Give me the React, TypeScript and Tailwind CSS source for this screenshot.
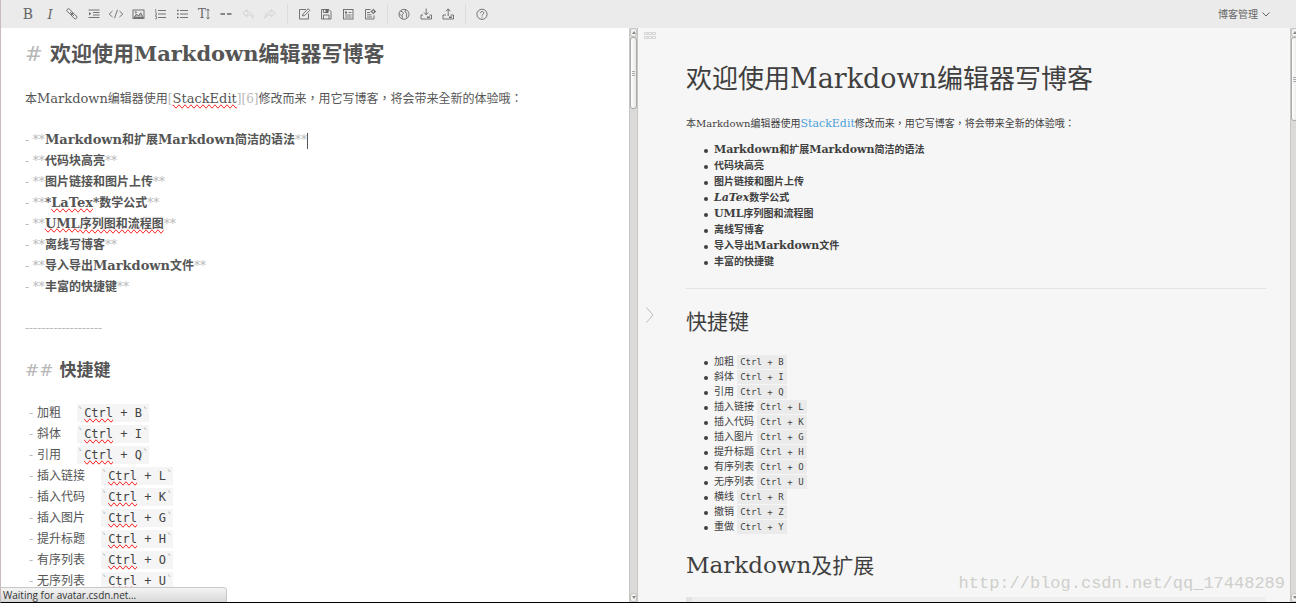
import React from 'react';
import { clsx } from 'clsx';

const serif = "font-['DejaVu_Serif','Noto_Sans_CJK_SC',serif]";
const serifTC = "font-['DejaVu_Serif','Noto_Sans_CJK_TC',serif]";
const mono = "font-['DejaVu_Sans_Mono','Noto_Sans_CJK_SC',monospace]";

const features = [
  'Markdown和扩展Markdown简洁的语法',
  '代码块高亮',
  '图片链接和图片上传',
  '*LaTex*数学公式',
  'UML序列图和流程图',
  '离线写博客',
  '导入导出Markdown文件',
  '丰富的快捷键',
];

const shortcuts = [
  ['加粗', 'B'],
  ['斜体', 'I'],
  ['引用', 'Q'],
  ['插入链接', 'L'],
  ['插入代码', 'K'],
  ['插入图片', 'G'],
  ['提升标题', 'H'],
  ['有序列表', 'O'],
  ['无序列表', 'U'],
  ['横线', 'R'],
  ['撤销', 'Z'],
  ['重做', 'Y'],
];

// Latin words are set slightly larger than the Chinese text around them
function Mixed({ text, latin }: { text: string; latin: string }) {
  return (
    <>
      {text.split(/([A-Za-z]+)/).map((part, i) =>
        /^[A-Za-z]/.test(part) ? (
          <span key={i} className={clsx('leading-none', latin)}>
            {part}
          </span>
        ) : (
          part
        )
      )}
    </>
  );
}

function Icon({ children }: { children: React.ReactNode }) {
  return (
    <svg className="h-3 w-3 overflow-visible" viewBox="0 0 12 12" fill="none" stroke="currentColor" strokeWidth="0.9">
      {children}
    </svg>
  );
}

type Tool = { label: string; icon: React.ReactNode; disabled?: boolean };

const tools: Tool[][] = [
  [
    { label: '加粗', icon: <span className="text-[14px]">B</span> },
    { label: '斜体', icon: <span className="text-[13px] italic">I</span> },
    {
      label: '链接',
      icon: (
        <Icon>
          <rect x="0.4" y="2" width="6.6" height="3.2" rx="1.6" transform="rotate(45 3.7 3.6)" />
          <rect x="4.8" y="6.4" width="6.6" height="3.2" rx="1.6" transform="rotate(45 8.1 8)" />
          <path d="M4 4l4 4" />
        </Icon>
      ),
    },
    {
      label: '引用',
      icon: (
        <Icon>
          <path d="M0.5 2h11M5 4.5h6.5M5 7h6.5M0.5 9.5h11" />
          <path d="M1 4l2.2 1.8L1 7.6z" fill="currentColor" stroke="none" />
        </Icon>
      ),
    },
    {
      label: '代码',
      icon: (
        <Icon>
          <path d="M2.5 3L-0.8 6l3.3 3M9.5 3l3.3 3-3.3 3M7.5 1.8l-3 8.4" />
        </Icon>
      ),
    },
    {
      label: '图片',
      icon: (
        <Icon>
          <rect x="1" y="2" width="11" height="8.5" />
          <path d="M2 9.5l2.5-3.5 2 2 2.2-3.2 2.5 4.7z" fill="currentColor" fillOpacity="0.4" />
          <circle cx="3.8" cy="4.3" r="0.7" />
        </Icon>
      ),
    },
    {
      label: '有序列表',
      icon: (
        <Icon>
          <path d="M4 2.5h8M4 6h8M4 9.5h8" />
          <path d="M1.7 1v2.8M1 4.8h1.4v2.4H1M1 8.2h1.5v2.6H1" strokeWidth="0.7" />
        </Icon>
      ),
    },
    {
      label: '无序列表',
      icon: (
        <Icon>
          <path d="M4 2.5h8M4 6h8M4 9.5h8" />
          <path d="M1 2.5h1.6M1 6h1.6M1 9.5h1.6" strokeWidth="1.4" />
        </Icon>
      ),
    },
    {
      label: '标题',
      icon: (
        <>
          <span className="text-[12px]">T</span>
          <svg className="h-3 w-1" viewBox="0 0 4 12" fill="none" stroke="currentColor" strokeWidth="0.9">
            <path d="M2 1v10M0.5 2.5L2 1l1.5 1.5M0.5 9.5L2 11l1.5-1.5" />
          </svg>
        </>
      ),
    },
    {
      label: '横线',
      icon: (
        <Icon>
          <path d="M0.5 6H5M7 6h4.5" strokeWidth="1.4" />
        </Icon>
      ),
    },
    {
      label: '撤销',
      disabled: true,
      icon: (
        <Icon>
          <path d="M5 1.8L0.8 5.2 5 8.6V6.6c3 0 4.8 1 6 3.6C11 6.4 8.8 4 5 3.8z" />
        </Icon>
      ),
    },
    {
      label: '重做',
      disabled: true,
      icon: (
        <Icon>
          <path d="M7 1.8l4.2 3.4L7 8.6V6.6c-3 0-4.8 1-6 3.6C1 6.4 3.2 4 7 3.8z" />
        </Icon>
      ),
    },
  ],
  [
    {
      label: '新建',
      icon: (
        <Icon>
          <path d="M8 1.5H1.5v9.5h9V5.5" />
          <path d="M4.5 8l.7-2.3 5-5 1.6 1.6-5 5z" />
        </Icon>
      ),
    },
    {
      label: '保存',
      icon: (
        <Icon>
          <path d="M1.5 1.5h7.5L11 3.5V11H1.5z" />
          <path d="M3.5 1.5h4.5v3h-4.5zM3.5 11V7h5.5v4" />
          <path d="M6 1.5h2v3H6z" fill="currentColor" />
        </Icon>
      ),
    },
    {
      label: '草稿',
      icon: (
        <Icon>
          <rect x="1.5" y="1.5" width="9.5" height="9.5" />
          <path d="M6.5 4.5h3M3 7h6.5M3 9h6.5" strokeWidth="0.8" />
          <path d="M3 3.5h2v2H3z" fill="currentColor" stroke="none" />
        </Icon>
      ),
    },
    {
      label: '文档设置',
      icon: (
        <Icon>
          <path d="M6.5 1.5h-5V11H10V7.5M3 4.5h3M3 6.8h4.5M3 9h5" />
          <circle cx="9.3" cy="3.5" r="1.5" strokeWidth="1.2" />
          <path d="M9.3 0.8v1M9.3 5.2v1M6.6 3.5h1M11 3.5h1" />
        </Icon>
      ),
    },
  ],
  [
    {
      label: '发布',
      icon: (
        <Icon>
          <circle cx="6" cy="6.3" r="5" />
          <path d="M2.5 3.2l2 .6 1 1.5-1.500 1.600.3 3.600M7.5 1.800L7 4l1.800 1.200L8.300 8l.7 1.700M1.200 5.500l1.800 2" />
        </Icon>
      ),
    },
    {
      label: '导入',
      icon: (
        <Icon>
          <path d="M3 7H1v4h10.5V7h-2" />
          <path d="M6.2 0.5v6M4 4.5l2.2 2.3 2.2-2.3" />
          <path d="M7 9.2h3" strokeWidth="1.4" />
        </Icon>
      ),
    },
    {
      label: '导出',
      icon: (
        <Icon>
          <path d="M4 7H1v4h10.5V7h-3" />
          <path d="M6.2 8V1M4 3.2L6.2 0.8l2.2 2.4" />
          <path d="M7 9.2h3" strokeWidth="1.4" />
        </Icon>
      ),
    },
  ],
  [
    {
      label: '帮助',
      icon: (
        <Icon>
          <circle cx="6" cy="6.3" r="5.1" />
          <path d="M4.3 5.2C4.3 3 7.8 3 7.8 5 7.8 6.2 6 6.2 6 7.6M6 8.6v1" />
        </Icon>
      ),
    },
  ],
];

function Toolbar() {
  return (
    <header className="flex h-7 shrink-0 items-center bg-[#ebebeb] pl-4 pr-[26px] text-[#666]">
      {tools.map((group, i) => (
        <React.Fragment key={i}>
          {i > 0 && <span className="mr-[5px] ml-[6px] h-5 w-px bg-[#dcdcdc]" />}
          {group.map((tool) => (
            <button
              key={tool.label}
              type="button"
              aria-label={tool.label}
              disabled={tool.disabled}
              className={clsx('flex h-7 w-[22px] items-center justify-center leading-none', tool.disabled && 'text-[#cfcfcf]')}
            >
              {tool.icon}
            </button>
          ))}
        </React.Fragment>
      ))}
      <button type="button" className="ml-auto flex items-center gap-1 font-['Noto_Sans_CJK_SC',sans-serif] text-[10px] leading-4">
        博客管理
        <svg className="h-2 w-2" viewBox="0 0 8 8" fill="none" stroke="currentColor">
          <path d="M0.5 2.5L4 6l3.5-3.5" />
        </svg>
      </button>
    </header>
  );
}

function Arrow({ down }: { down?: boolean }) {
  return (
    <span className="flex h-[9px] shrink-0 items-center justify-center rounded-[3px] border border-[#c4c2bf] bg-[#f4f3f2]">
      <svg className="h-[3px] w-1" viewBox="0 0 4 3" fill="#888">
        <path d={down ? 'M0 0h4L2 3z' : 'M0 3h4L2 0z'} />
      </svg>
    </span>
  );
}

function Scrollbar({ thumb }: { thumb: string }) {
  return (
    <div className="flex w-[9px] shrink-0 flex-col border-x border-[#c9c7c4] bg-[#dbdad8]">
      <Arrow />
      <div
        className={clsx(
          'flex flex-col items-center justify-center gap-px rounded-[3px] border border-[#aaa] bg-linear-to-r from-white to-[#e9e8e6]',
          thumb
        )}
      >
        <span className="h-px w-[3px] bg-[#aaa]" />
        <span className="h-px w-[3px] bg-[#aaa]" />
        <span className="h-px w-[3px] bg-[#aaa]" />
      </div>
      <div className="flex-1" />
      <Arrow down />
    </div>
  );
}

function Mark({ children }: { children: React.ReactNode }) {
  return <span className="font-normal text-[#b8b8b8]">{children}</span>;
}

const misspelt = '[text-decoration-line:spelling-error]';

function Editor() {
  return (
    <section className="flex min-h-0 min-w-0">
      <div className="min-w-0 flex-1 overflow-hidden bg-white pt-[11px] pl-6 text-[12px] leading-[21px] text-[#555]">
        <h1 className="text-[21px] leading-[30px] font-bold">
          <Mark>#</Mark> 欢迎使用Markdown编辑器写博客
        </h1>
        <p className={clsx('mt-5', serifTC)}>
          <Mixed text="本Markdown编辑器使用" latin="text-[13px]" />
          <Mark>[</Mark>
          <span className={clsx('text-[13px] leading-none', misspelt)}>StackEdit</span>
          <Mark>][6]</Mark>
          修改而来，用它写博客，将会带来全新的体验哦：
        </p>
        <ul className="mt-5">
          {features.map((item, i) => (
            <li key={item}>
              <Mark>- **</Mark>
              <b className={clsx(i === 4 && misspelt)}>
                {i === 3 ? (
                  <>
                    *<span className={clsx('text-[13px] leading-none', misspelt)}>LaTex</span>*数学公式
                  </>
                ) : (
                  <Mixed text={item} latin="text-[13px]" />
                )}
              </b>
              <Mark>**</Mark>
              {i === 0 && <span className="inline-block h-4 w-px bg-[#555] align-middle" />}
            </li>
          ))}
        </ul>
        <p className="mt-5">
          <Mark>-------------------</Mark>
        </p>
        <h2 className="mt-[18px] text-[17px] leading-[26px] font-bold">
          <Mark>##</Mark> 快捷键
        </h2>
        <ul className="mt-5 pl-1">
          {shortcuts.map(([name, key]) => (
            <li key={name}>
              <Mark>-</Mark> {name}
              <code className={clsx('ml-4 bg-[#f5f5f5] py-[2px] text-[12px] leading-none text-[#444]', mono)}>
                <Mark>`</Mark>
                <span className={misspelt}>Ctrl</span> + {key}
                <Mark>`</Mark>
              </code>
            </li>
          ))}
        </ul>
      </div>
      <Scrollbar thumb="h-[72px]" />
    </section>
  );
}

function Bullet() {
  return <span className="mr-[6px] inline-block size-1 rounded-full bg-current align-middle" />;
}

function Preview() {
  return (
    <section className="relative flex min-h-0 min-w-0 bg-[#f6f6f6]">
      <div className="flex w-6 shrink-0 flex-col items-center justify-center">
        <button type="button" aria-label="目录" className="absolute top-1 left-[6px] text-[#ccc]">
          <svg className="h-[7px] w-3" viewBox="0 0 12 7" fill="none" stroke="currentColor" strokeWidth="0.8">
            <path d="M.5 .5h3v2h-3zM4.5 .5h3v2h-3zM8.5 .5h3v2h-3zM.5 4.5h3v2h-3zM4.5 4.5h3v2h-3zM8.5 4.5h3v2h-3z" />
          </svg>
        </button>
        <button type="button" aria-label="隐藏预览" className="text-[#bbb]">
          <svg className="h-4 w-2" viewBox="0 0 8 16" fill="none" stroke="currentColor">
            <path d="M0.5 0.5L7 8L0.5 15.5" />
          </svg>
        </button>
      </div>
      <article className="min-w-0 flex-1 overflow-hidden pt-8 pr-6 pl-6 text-[10px] text-[#3f3f3f]">
        <h1 className="text-[26px] leading-[38px]">
          <Mixed text="欢迎使用Markdown编辑器写博客" latin="text-[27px]" />
        </h1>
        <p className={clsx('mt-[18px] leading-4', serifTC)}>
          <Mixed text="本Markdown编辑器使用" latin="text-[10px]" />
          <a href="#stackedit" className="text-[11px] leading-none text-[#4a9fd8]">
            StackEdit
          </a>
          修改而来，用它写博客，将会带来全新的体验哦：
        </p>
        <ul className="mt-[10px] pl-[18px] leading-4 font-bold">
          {features.map((item, i) => (
            <li key={item}>
              <Bullet />
              {i === 3 ? (
                <>
                  <em className="text-[11px] leading-none">LaTex</em>数学公式
                </>
              ) : (
                <Mixed text={item} latin="text-[11px]" />
              )}
            </li>
          ))}
        </ul>
        <hr className="mt-[18px] border-[#e3e3e3]" />
        <h2 className="mt-[18px] text-[21px] leading-[30px]">快捷键</h2>
        <ul className="mt-[17px] pl-[18px] leading-[15px]">
          {shortcuts.map(([name, key]) => (
            <li key={name}>
              <Bullet />
              {name}{' '}
              <code className={clsx('bg-[#ebebeb] px-[3px] py-[2px] text-[9px] leading-none', mono)}>Ctrl + {key}</code>
            </li>
          ))}
        </ul>
        <h2 className="mt-[17px] text-[21px] leading-[30px]">
          <Mixed text="Markdown及扩展" latin="text-[23px]" />
        </h2>
        <div className="mt-4 h-10 border-l-[6px] border-[#e3e3e3] bg-[#eee]" />
      </article>
      <div className="flex w-[6px] shrink-0 overflow-hidden">
        <Scrollbar thumb="h-[84px]" />
      </div>
    </section>
  );
}

export default function App() {
  return (
    <div className={clsx('relative flex h-screen flex-col overflow-hidden border-b border-l border-b-black border-l-[#c9bcbf] bg-white', serif)}>
      <Toolbar />
      <main className="grid min-h-0 flex-1 grid-cols-[637fr_658fr]">
        <Editor />
        <Preview />
      </main>
      <div className="absolute bottom-0 left-0 w-[226px] rounded-tr border-t border-r border-[#c8c8c8] bg-linear-to-b from-[#f4f4f4] to-[#d8d8d8] pl-[2px] font-['Open_Sans',sans-serif] text-[10px] leading-[14px] text-[#333]">
        Waiting for avatar.csdn.net...
      </div>
      <div className="absolute right-[11px] bottom-[6px] font-['Liberation_Mono',monospace] text-[17px] leading-6 text-[#cfcfcb]">
        http://blog.csdn.net/qq_17448289
      </div>
    </div>
  );
}
